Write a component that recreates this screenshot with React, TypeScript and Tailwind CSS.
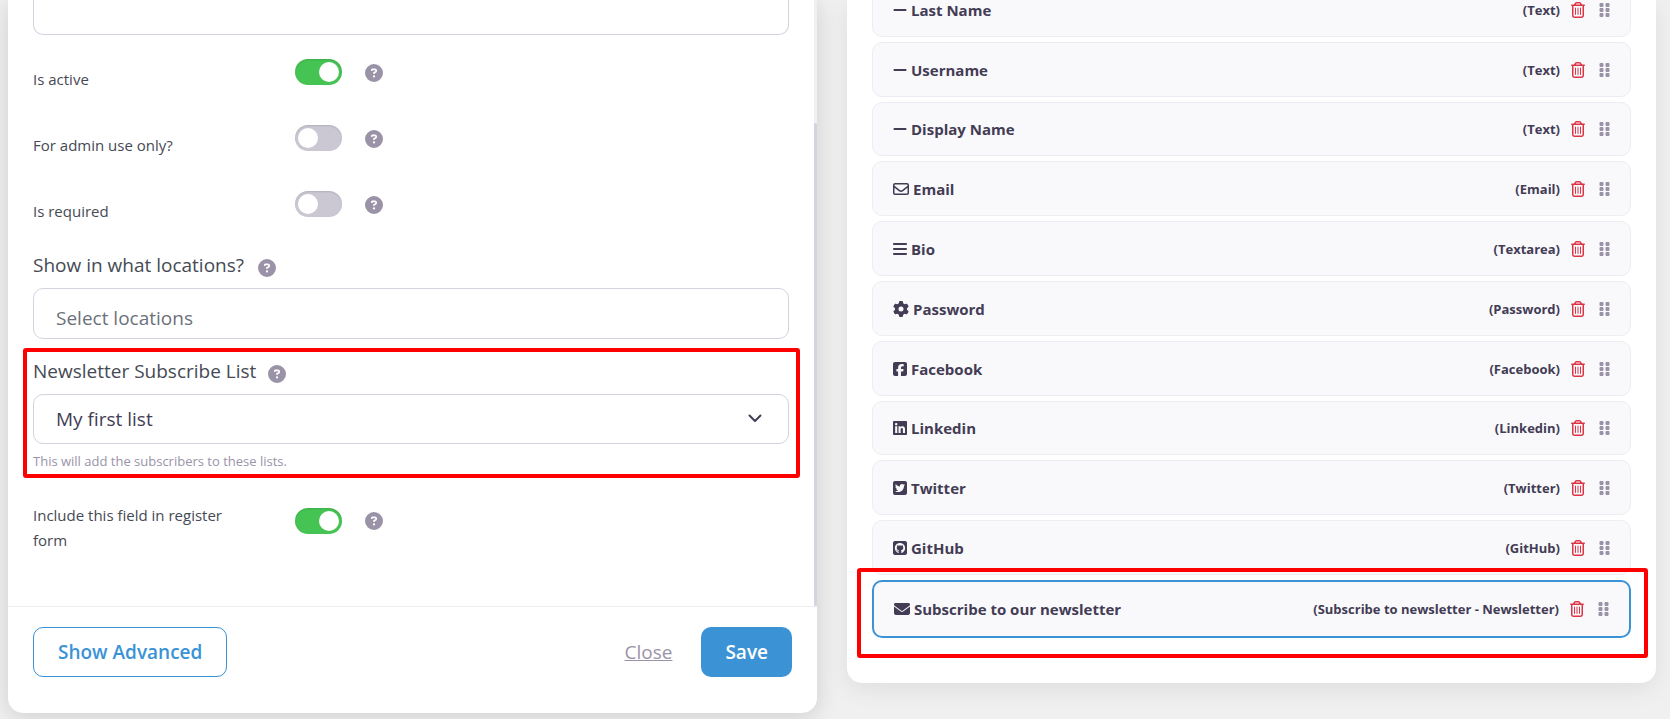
import { useState } from "react";
import type { ReactNode } from "react";
import type { IconType } from "react-icons";
import {
  FaBars,
  FaCircleQuestion,
  FaEnvelope,
  FaGear,
  FaGripVertical,
  FaLinkedin,
  FaMinus,
  FaRegEnvelope,
  FaRegTrashCan,
  FaSquareFacebook,
  FaSquareGithub,
  FaSquareTwitter,
} from "react-icons/fa6";

type Field = { name: string; type: string; Icon: IconType; wide?: boolean };

const fields: Field[] = [
  { name: "Last Name", type: "Text", Icon: FaMinus },
  { name: "Username", type: "Text", Icon: FaMinus },
  { name: "Display Name", type: "Text", Icon: FaMinus },
  { name: "Email", type: "Email", Icon: FaRegEnvelope, wide: true },
  { name: "Bio", type: "Textarea", Icon: FaBars },
  { name: "Password", type: "Password", Icon: FaGear, wide: true },
  { name: "Facebook", type: "Facebook", Icon: FaSquareFacebook },
  { name: "Linkedin", type: "Linkedin", Icon: FaLinkedin },
  { name: "Twitter", type: "Twitter", Icon: FaSquareTwitter },
  { name: "GitHub", type: "GitHub", Icon: FaSquareGithub },
];

const newsletterField: Field = {
  name: "Subscribe to our newsletter",
  type: "Subscribe to newsletter - Newsletter",
  Icon: FaEnvelope,
  wide: true,
};

function Help({ topic }: { topic: string }) {
  return (
    <button type="button" aria-label={`Help: ${topic}`} className="block text-[#9a93a8]">
      <FaCircleQuestion className="size-[18px]" />
    </button>
  );
}

function Toggle({ id, initial }: { id: string; initial: boolean }) {
  const [on, setOn] = useState(initial);
  return (
    <input
      id={id}
      type="checkbox"
      role="switch"
      checked={on}
      onChange={() => setOn(!on)}
      className="flex h-[26px] w-[47px] shrink-0 cursor-pointer appearance-none items-center rounded-full bg-[#cbc8d4] px-[3px] shadow-[inset_0_1px_2px_rgba(0,0,0,0.12)] before:size-5 before:rounded-full before:bg-white before:content-[''] checked:justify-end checked:bg-[#45c453]"
    />
  );
}

function ToggleRow({ id, label, initial }: { id: string; label: string; initial: boolean }) {
  return (
    <div className="flex h-[66px] items-start">
      <label htmlFor={id} className="w-[262px] pt-2 text-[15px] leading-[25px]">
        {label}
      </label>
      <Toggle id={id} initial={initial} />
      <div className="ml-[23px] pt-[5px]">
        <Help topic={label} />
      </div>
    </div>
  );
}

function FieldRow({ field, selected = false }: { field: Field; selected?: boolean }) {
  const { name, type, Icon, wide } = field;
  return (
    <div
      className={
        "flex items-center justify-between gap-4 rounded-[10px] bg-[#f9f9fc] px-5 text-[#433c54] " +
        (selected ? "border-2 border-[#3b93d6] py-[15px]" : "border border-[#ececf3] pt-px")
      }
    >
      <span className="flex items-center gap-1 text-[15px] leading-6 font-bold">
        <Icon className={wide ? "h-4 w-4" : "h-4 w-[14px]"} />
        {name}
      </span>
      <span className="flex items-center text-[13px] leading-6 font-bold">
        ({type})
        <button type="button" aria-label={`Delete ${name}`} className="ml-[11px] text-[#dc3545]">
          <FaRegTrashCan className="h-4 w-[14px]" />
        </button>
        <button type="button" aria-label={`Move ${name}`} className="ml-[14px] text-[#9a93a8]">
          <FaGripVertical className="h-4 w-[11px]" />
        </button>
      </span>
    </div>
  );
}

function Highlighted({ children, frame }: { children: ReactNode; frame: string }) {
  return (
    <div className="relative">
      {children}
      <div className={"pointer-events-none absolute rounded-[3px] border-4 border-[#ff0000] " + frame} />
    </div>
  );
}

export default function App() {
  return (
    <main className="grid min-h-screen grid-cols-2 items-start gap-[30px] overflow-hidden bg-[#f0f0f0] pr-[14px] pl-2 font-['Open_Sans','Noto_Sans',sans-serif] text-[#454a54]">
      <form
        className="min-w-0 rounded-b-[15px] bg-white shadow-[0_4px_24px_rgba(0,0,0,0.14)]"
        onSubmit={(e) => e.preventDefault()}
      >
        <div className="flex border-b border-[#ececf3]">
          <div className="min-w-0 flex-1 pr-[25px] pb-[53px] pl-[25px]">
            <textarea
              aria-label="Description"
              className="block h-[35px] w-full resize-none rounded-b-[10px] border border-t-0 border-[#d3d2de] px-6"
            />
            <div className="pt-6">
              <ToggleRow id="active" label="Is active" initial={true} />
              <ToggleRow id="admin" label="For admin use only?" initial={false} />
              <ToggleRow id="required" label="Is required" initial={false} />
            </div>
            <div className="-mt-[7px] flex h-[38px] items-start gap-[14px]">
              <label htmlFor="locations" className="text-[19px] leading-[30px]">
                Show in what locations?
              </label>
              <div className="pt-[9px]">
                <Help topic="Locations" />
              </div>
            </div>
            <input
              id="locations"
              placeholder="Select locations"
              className="block h-[51px] w-full rounded-[10px] border border-[#d3d2de] px-[22px] pt-2 text-[19px] placeholder:text-[#6c717a]"
            />
            <Highlighted frame="top-[9px] -right-[11px] -bottom-[7px] -left-[10px]">
              <div className="flex h-[55px] items-start gap-3 pt-[17px]">
                <label htmlFor="list" className="text-[19px] leading-[30px]">
                  Newsletter Subscribe List
                </label>
                <div className="pt-[9px]">
                  <Help topic="Newsletter list" />
                </div>
              </div>
              <div className="relative">
                <select
                  id="list"
                  className="block h-[50px] w-full appearance-none rounded-[10px] border border-[#d3d2de] bg-white px-[22px] text-[19px] text-[#433c54]"
                >
                  <option>My first list</option>
                </select>
                <svg
                  viewBox="0 0 16 16"
                  className="pointer-events-none absolute top-4 right-[26px] size-4 fill-none stroke-[#433c54] stroke-2"
                >
                  <path d="M2.5 5.5l5.5 5.5 5.5-5.5" strokeLinecap="round" strokeLinejoin="round" />
                </svg>
              </div>
              <p className="pt-[7px] text-[13px] leading-5 text-[#9a93a8]">
                This will add the subscribers to these lists.
              </p>
            </Highlighted>
            <div className="flex items-start pt-8">
              <label htmlFor="include" className="w-[262px] pr-12 text-[15px] leading-[25px]">
                Include this field in register form
              </label>
              <div className="flex items-center gap-[23px] pt-[5px]">
                <Toggle id="include" initial={true} />
                <Help topic="Register form" />
              </div>
            </div>
          </div>
          <div className="flex w-[3px] flex-col bg-[#f0f0f0] pt-[123px]">
            <div className="w-full flex-1 rounded-full bg-[#d2d4e1]" />
          </div>
        </div>
        <div className="flex items-center px-[25px] pt-5 pb-9 text-[19px] leading-[30px] font-semibold">
          <button type="button" className="h-[50px] rounded-[10px] border border-[#3b93d6] px-6 text-[#3b93d6]">
            Show Advanced
          </button>
          <button type="button" className="ml-auto font-medium text-[#9a93a8] underline">
            Close
          </button>
          <button type="submit" className="ml-[29px] h-[50px] rounded-[10px] bg-[#3b93d6] px-6 text-white">
            Save
          </button>
        </div>
      </form>

      <section
        aria-label="Fields"
        className="min-w-0 rounded-b-[15px] bg-white px-[25px] pb-[45px] shadow-[0_6px_24px_rgba(0,0,0,0.08)]"
      >
        <div className="-mt-[18px] mb-[5px] grid min-h-[593px] auto-rows-fr gap-[5px]">
          {fields.map((field) => (
            <FieldRow key={field.name} field={field} />
          ))}
        </div>
        <Highlighted frame="-top-3 -right-[17px] -bottom-5 -left-[15px]">
          <FieldRow field={newsletterField} selected />
        </Highlighted>
      </section>
    </main>
  );
}
